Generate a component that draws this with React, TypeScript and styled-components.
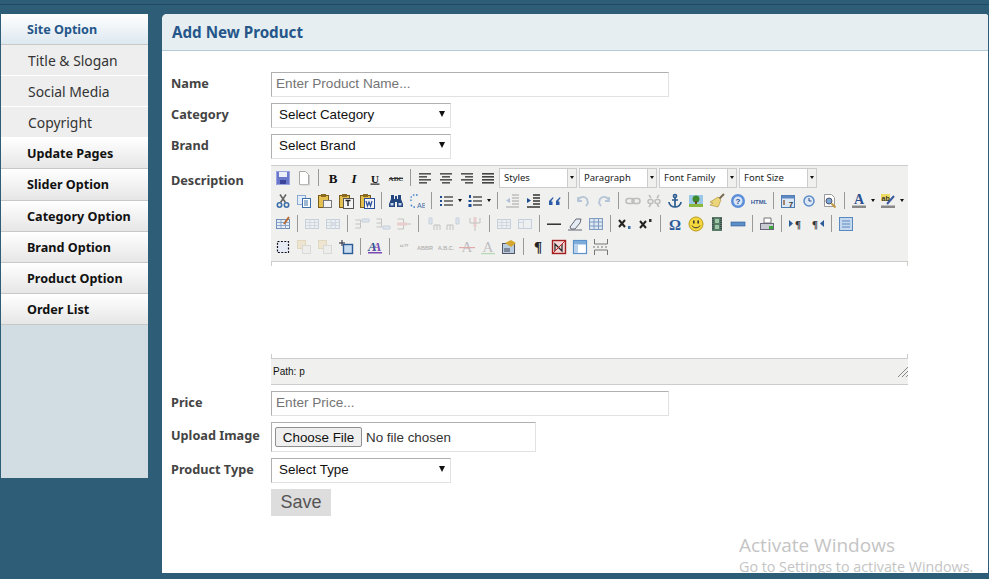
import React from "react";
import styled, { createGlobalStyle } from "styled-components";

const GlobalStyle = createGlobalStyle`
  html, body {
    margin: 0;
    padding: 0;
    height: 100%;
    background-color: #2e5d78;
    overflow: hidden;
  }
  * {
    box-sizing: border-box;
  }
`;

const Page = styled.div`
  position: relative;
  display: flex;
  align-items: flex-start;
  gap: 14px;
  height: 579px;
  padding: 14px 1px 6px 1px;
  background: linear-gradient(#1f4a62, #1f4a62) left 4px / 100% 1px no-repeat, #2e5d78;
  font-family: "Noto Sans", sans-serif;
`;

const Sidebar = styled.nav`
  display: flex;
  flex-direction: column;
  flex: none;
  width: 147px;
  height: 464px;
  background-color: #d1dde3;
`;

const MenuHead = styled.div<{ $active?: boolean; $tall?: boolean }>`
  display: flex;
  align-items: center;
  flex: none;
  height: ${(props) => (props.$tall ? "32px" : "31px")};
  padding-left: 26px;
  font-size: 12.6px;
  font-weight: 700;
  color: ${(props) => (props.$active ? "#25568a" : "#111111")};
  background: linear-gradient(
    ${(props) => (props.$active ? "#ffffff, #dde8f0" : "#ffffff, #e6e6e6")}
  );
  border-bottom: 1px solid #c8c8c8;
`;

const MenuSub = styled.div`
  display: flex;
  align-items: center;
  flex: none;
  height: 31px;
  padding-left: 27px;
  font-size: 13.9px;
  color: #333333;
  background-color: #eeeeee;
  border-bottom: 1px solid #ffffff;
`;

const Main = styled.main`
  flex: 1;
  height: 559px;
  background-color: #ffffff;
  border-top-left-radius: 5px;
  border-top-right-radius: 3px;
`;

const PanelTitle = styled.h2`
  display: flex;
  align-items: center;
  height: 37px;
  margin: 0;
  padding-left: 10px;
  font-size: 15.2px;
  font-weight: 700;
  color: #25568a;
  background-color: #e6eef1;
  border-bottom: 1px solid #b4ccd8;
  border-top-left-radius: 5px;
  border-top-right-radius: 3px;
`;

const Form = styled.form`
  display: flex;
  flex-direction: column;
  gap: 6px;
  padding: 21px 0 0 9px;
`;

const Row = styled.div<{ $top?: boolean }>`
  display: flex;
  align-items: ${(props) => (props.$top ? "flex-start" : "center")};
`;

const Label = styled.label<{ $top?: boolean }>`
  flex: none;
  width: 100px;
  padding-top: ${(props) => (props.$top ? "6px" : "0")};
  margin-top: ${(props) => (props.$top ? "0" : "-4px")};
  font-size: 12.7px;
  font-weight: 700;
  color: #444444;
`;

const TextInput = styled.input`
  width: 398px;
  height: 25px;
  padding: 0 4px 2px;
  font-family: "Liberation Sans", sans-serif;
  font-size: 13.6px;
  background-color: #ffffff;
  border: 1px solid;
  border-color: #b0b0b0 #e2e2e2 #e2e2e2 #b0b0b0;
  &::placeholder {
    color: #757575;
  }
`;

const SelectWrap = styled.div`
  position: relative;
  width: 180px;
  height: 25px;
`;

const Select = styled.select`
  display: block;
  appearance: none;
  width: 100%;
  height: 100%;
  padding: 0 7px 2px;
  font-family: "Liberation Sans", sans-serif;
  font-size: 13.4px;
  color: #111111;
  background-color: #ffffff;
  border: 1px solid;
  border-color: #b0b0b0 #e2e2e2 #e2e2e2 #b0b0b0;
  border-radius: 0;
`;

const SelectArrow = styled.span`
  position: absolute;
  top: 8px;
  right: 6px;
  width: 0;
  height: 0;
  border-left: 3.5px solid transparent;
  border-right: 3.5px solid transparent;
  border-top: 6px solid #111111;
  pointer-events: none;
`;

const FileInput = styled.input`
  width: 265px;
  height: 30px;
  padding: 4px 3px;
  font-family: "Liberation Sans", sans-serif;
  font-size: 13.4px;
  color: #333333;
  border: 1px solid;
  border-color: #b0b0b0 #e2e2e2 #e2e2e2 #b0b0b0;
  &::file-selector-button {
    width: 87px;
    height: 20px;
    margin-right: 4px;
    padding: 0;
    font-family: "Liberation Sans", sans-serif;
    font-size: 13.4px;
    color: #111111;
    background-color: #efefef;
    border: 1px solid #8f8f8f;
    border-radius: 2px;
  }
`;

const SaveButton = styled.button`
  width: 60px;
  height: 27px;
  margin-left: 100px;
  padding: 0;
  font-family: "Liberation Sans", sans-serif;
  font-size: 18px;
  color: #555555;
  background-color: #dddddd;
  border: none;
`;

const Editor = styled.div`
  display: flex;
  flex-direction: column;
  width: 637px;
  height: 220px;
  font-family: "Liberation Sans", sans-serif;
`;

const Toolbars = styled.div`
  display: flex;
  flex-direction: column;
  flex: none;
  height: 97px;
  padding-left: 1px;
  background-color: #f0f0ee;
  border-top: 1px solid #cccccc;
  border-bottom: 1px solid #cccccc;
`;

const ToolRow = styled.div`
  display: flex;
  align-items: center;
  height: 23px;
`;

const ToolButton = styled.span<{ $muted?: boolean }>`
  display: flex;
  flex: none;
  align-items: center;
  justify-content: center;
  width: 21px;
  height: 20px;
  opacity: ${(props) => (props.$muted ? 0.32 : 1)};
`;

const ToolSep = styled.span`
  flex: none;
  width: 1px;
  height: 17px;
  margin: 0 3.5px;
  background-color: #999999;
`;

const ToolCaret = styled.span`
  flex: none;
  width: 0;
  height: 0;
  margin: 0 2.5px 0 1.5px;
  border-left: 2.5px solid transparent;
  border-right: 2.5px solid transparent;
  border-top: 3px solid #111111;
`;

const ToolSelect = styled.span`
  display: flex;
  flex: none;
  align-items: center;
  justify-content: space-between;
  width: 78px;
  height: 20px;
  margin-right: 2px;
  padding-left: 4px;
  font-family: "Noto Sans", sans-serif;
  font-size: 9.5px;
  color: #222222;
  background: linear-gradient(to right, #ffffff 67px, #cccccc 67px, #cccccc 68px, #f0f0ee 68px);
  border: 1px solid #cccccc;
`;

const SelectCaret = styled.span`
  flex: none;
  width: 0;
  height: 0;
  margin-right: 2px;
  border-left: 2.5px solid transparent;
  border-right: 2.5px solid transparent;
  border-top: 3px solid #111111;
`;

const FontSelects = styled.div`
  display: flex;
  margin-left: 1px;
`;

const EditArea = styled.div`
  flex: 1;
  background:
    linear-gradient(#cccccc, #cccccc) left top / 1px 4px no-repeat,
    linear-gradient(#cccccc, #cccccc) right top / 1px 4px no-repeat,
    linear-gradient(#cccccc, #cccccc) left bottom / 1px 4px no-repeat,
    linear-gradient(#cccccc, #cccccc) right bottom / 1px 4px no-repeat,
    #ffffff;
`;

const StatusBar = styled.div`
  display: flex;
  flex: none;
  align-items: center;
  justify-content: space-between;
  height: 27px;
  padding: 0 0 0 2px;
  font-size: 10px;
  color: #111111;
  background-color: #f0f0ee;
  border-top: 1px solid #cccccc;
  border-bottom: 1px solid #cccccc;
`;

const Watermark = styled.div`
  position: absolute;
  left: 739px;
  top: 532px;
  width: 245px;
  height: 41px;
  overflow: hidden;
  font-family: "Open Sans", sans-serif;
  color: #c4c4c4;
  pointer-events: none;
`;

const WatermarkTitle = styled.div`
  font-size: 19px;
  line-height: 26px;
`;

const WatermarkText = styled.div`
  font-size: 14.3px;
  line-height: 18px;
  white-space: nowrap;
`;

const lines = (rows: [number, number][], color = "#555") => (
  <g fill={color}>
    {rows.map(([x, w], i) => (
      <rect key={i} x={x} y={3 + i * 3} width={w} height={1.6} />
    ))}
  </g>
);

const doc = (x: number, y: number, w: number, h: number, fill = "#fff", stroke = "#5577aa") => (
  <rect x={x + 0.5} y={y + 0.5} width={w} height={h} fill={fill} stroke={stroke} />
);

const clip = (inner: React.ReactNode) => (
  <>
    <rect x="1.5" y="2.5" width="10" height="12" fill="#e4c050" stroke="#7a5c18" />
    <rect x="4" y="1" width="5" height="3" fill="#8a6a20" />
    {inner}
  </>
);

const tableGrid = (
  <>
    <rect x="1.5" y="3.5" width="13" height="9" fill="#e8eef6" stroke="#6f8fb8" />
    <path d="M1.5 6.5h13M1.5 9.5h13M6 3.5v9M10.5 3.5v9" stroke="#8da6c8" fill="none" />
  </>
);

const serifLabel = (label: string, style: string, size = 13, color = "#111") => (
  <text
    x="8"
    y="12.5"
    textAnchor="middle"
    fontFamily="Liberation Serif, serif"
    fontWeight="700"
    fontStyle={style}
    fontSize={size}
    fill={color}
  >
    {label}
  </text>
);

const icons: Record<string, React.ReactNode> = {
  save: (
    <>
      <rect x="1.5" y="1.5" width="13" height="13" fill="#6a78cc" stroke="#9aa2e0" />
      <rect x="4" y="2" width="8" height="5" fill="#eceef8" />
      <rect x="5" y="10" width="6" height="4" fill="#39449a" />
    </>
  ),
  newdoc: (
    <>
      <path d="M3.5 1.5h6l3 3v10h-9z" fill="#fff" stroke="#a8a8a8" />
      <path d="M13.5 5v10h-9" fill="none" stroke="#ccc" />
    </>
  ),
  bold: serifLabel("B", "normal"),
  italic: serifLabel("I", "italic"),
  underline: (
    <>
      {serifLabel("U", "normal", 11)}
      <rect x="3.5" y="13.5" width="9" height="1.2" fill="#222" />
    </>
  ),
  strike: (
    <>
      <text x="8" y="11" textAnchor="middle" fontFamily="Liberation Serif, serif" fontWeight="700" fontSize="7" fill="#333">
        ABC
      </text>
      <rect x="1" y="8" width="14" height="1" fill="#333" />
    </>
  ),
  left: lines([[2, 12], [2, 8], [2, 12], [2, 8]]),
  center: lines([[2, 12], [4, 8], [2, 12], [4, 8]]),
  right: lines([[2, 12], [6, 8], [2, 12], [6, 8]]),
  justify: lines([[2, 12], [2, 12], [2, 12], [2, 12]], "#444"),
  cut: (
    <g fill="none" stroke="#3c6ea8" strokeWidth="1.6">
      <path d="M5 1.5l5.5 8M11 1.5l-5.5 8" stroke="#666" />
      <circle cx="4.5" cy="12" r="2.2" />
      <circle cx="11.5" cy="12" r="2.2" />
    </g>
  ),
  copy: (
    <>
      {doc(1, 2, 8, 9, "#e4eefa", "#8aa8d0")}
      {doc(6, 5, 8, 9, "#ffffff", "#3c6ea8")}
      <path d="M8 8h4M8 10h4M8 12h4" stroke="#3c6ea8" />
    </>
  ),
  paste: clip(doc(6, 7, 8, 7, "#f4f4f4", "#777")),
  pastetext: clip(
    <>
      {doc(5, 5, 10, 10, "#f4f4f4", "#555")}
      <path d="M7.5 7.5h5M10 7.5v5.5" stroke="#222" strokeWidth="1.4" />
    </>
  ),
  pasteword: clip(
    <>
      {doc(5, 5, 10, 10, "#f4f4f4", "#2a4f9a")}
      <path d="M7 8l1.5 5 1.5-4 1.5 4 1.5-5" stroke="#2a4f9a" fill="none" strokeWidth="1.2" />
    </>
  ),
  find: (
    <g fill="#24467e">
      <path d="M3 2h3v4h1V3h2v3h1V2h3v4l2 5v3H9V9H7v5H1v-3l2-5z" />
      <rect x="2.5" y="10" width="3" height="2.5" fill="#c4d4ee" />
      <rect x="10.5" y="10" width="3" height="2.5" fill="#c4d4ee" />
    </g>
  ),
  replace: (
    <>
      <path d="M2 8V5a3 3 0 0 1 3-3h4M6 14H5a3 3 0 0 1-3-3" fill="none" stroke="#3c7ac8" strokeWidth="1.3" strokeDasharray="1.6 1.6" />
      <text x="8" y="14.5" fontFamily="Liberation Sans, sans-serif" fontSize="7" fill="#3c6ea8">
        AB
      </text>
    </>
  ),
  bullist: (
    <>
      <path d="M6 4h9M6 8h9M6 12h9" stroke="#555" strokeWidth="1.4" />
      <path d="M2 3h2v2H2zM2 7h2v2H2zM2 11h2v2H2z" fill="#1e4a90" />
    </>
  ),
  numlist: (
    <>
      <path d="M6 4h9M6 8h9M6 12h9" stroke="#555" strokeWidth="1.4" />
      <path d="M2 2h2v3H2zM1.5 7h3v2h-3zM1.5 11h3v3h-3z" fill="#1e4a90" />
    </>
  ),
  outdent: (
    <>
      <path d="M8 2h7M8 5h7M8 8h7M8 11h7M2 14h13" stroke="#555" strokeWidth="1.3" />
      <path d="M6 5v5L2 7.5z" fill="#2c5ca8" />
    </>
  ),
  indent: (
    <>
      <path d="M8 2h7M8 5h7M8 8h7M8 11h7M2 14h13" stroke="#333" strokeWidth="1.3" />
      <path d="M2 5v5l4-2.5z" fill="#1e4a90" />
    </>
  ),
  quote: (
    <g fill="#2c5ca8">
      <path d="M7 4L3 8v4h3.5V8.5H5L7.5 5zM14 4l-4 4v4h3.5V8.5H12L14.5 5z" />
    </g>
  ),
  undo: <path d="M3 8a5 5 0 0 1 9-2l1 4-2 3M3 4v4h4" fill="none" stroke="#3c6ea8" strokeWidth="1.8" />,
  redo: <path d="M13 8a5 5 0 0 0-9-2L3 10l2 3M13 4v4H9" fill="none" stroke="#3c6ea8" strokeWidth="1.8" />,
  link: (
    <g fill="none" stroke="#555" strokeWidth="1.5">
      <rect x="1" y="5.5" width="8" height="5" rx="2.5" />
      <rect x="7" y="5.5" width="8" height="5" rx="2.5" />
    </g>
  ),
  unlink: (
    <g fill="none" stroke="#555" strokeWidth="1.5">
      <path d="M3 2l2 3M13 14l-2-3M13 2l-2 3M3 14l2-3" />
      <rect x="2" y="6.5" width="5" height="4" rx="2" />
      <rect x="9" y="6.5" width="5" height="4" rx="2" />
    </g>
  ),
  anchor: (
    <g fill="none" stroke="#2c5c90" strokeWidth="1.7">
      <circle cx="8" cy="3" r="1.5" />
      <path d="M8 4.5V14M5 7h6M2 9c0 3 3 5 6 5s6-2 6-5" />
    </g>
  ),
  image: (
    <>
      <rect x="1" y="2" width="14" height="12" fill="#9cc8e8" />
      <circle cx="8" cy="6" r="3.5" fill="#3c8a2c" />
      <rect x="7" y="8" width="2" height="4" fill="#6a4a20" />
      <rect x="1" y="11" width="14" height="3" fill="#8ab83c" />
    </>
  ),
  cleanup: (
    <>
      <path d="M15 1L9 7" stroke="#7a6a50" strokeWidth="2" />
      <path d="M9 4l3 3-3 7-8-2 3-2-3-1z" fill="#ecd478" stroke="#a88a30" strokeWidth="0.6" />
    </>
  ),
  help: (
    <>
      <circle cx="8" cy="8" r="7" fill="#5c8ed8" />
      <circle cx="8" cy="8" r="4.5" fill="#d8e6f8" />
      <text x="8" y="11" textAnchor="middle" fontFamily="Liberation Sans, sans-serif" fontWeight="700" fontSize="8" fill="#234a90">
        ?
      </text>
    </>
  ),
  html: (
    <text x="8" y="10.5" textAnchor="middle" fontFamily="Liberation Sans, sans-serif" fontWeight="700" fontSize="6" fill="#3c5c9c">
      HTML
    </text>
  ),
  date: (
    <>
      <rect x="1.5" y="2.5" width="13" height="12" fill="#dce8f6" stroke="#4f7ab0" />
      <rect x="1.5" y="2.5" width="13" height="3" fill="#5c88c0" />
      <text x="11" y="14" textAnchor="middle" fontFamily="Liberation Sans, sans-serif" fontWeight="700" fontSize="8" fill="#333">
        7
      </text>
      <path d="M4 7v5" stroke="#8a5a30" strokeWidth="1.4" />
    </>
  ),
  time: (
    <>
      <circle cx="8" cy="8" r="5" fill="#dce8f8" stroke="#5c8cc8" strokeWidth="1.5" />
      <path d="M8 5v3h2.5" fill="none" stroke="#2c4a80" />
    </>
  ),
  preview: (
    <>
      <path d="M2.5 1.5h7l3 3v9h-10z" fill="#fff" stroke="#999" />
      <circle cx="7" cy="8" r="3" fill="#7ca8d8" stroke="#556" />
      <path d="M9.5 10.5l4 4" stroke="#c09a40" strokeWidth="2" />
    </>
  ),
  fore: (
    <>
      <text x="8" y="11" textAnchor="middle" fontFamily="Liberation Serif, serif" fontWeight="700" fontSize="14" fill="#2a4f90">
        A
      </text>
      <rect x="1" y="12.5" width="14" height="2.5" fill="#888" />
    </>
  ),
  back: (
    <>
      <rect x="1" y="1" width="9" height="7" fill="#eedc60" />
      <text x="1.5" y="7.5" fontFamily="Liberation Sans, sans-serif" fontWeight="700" fontSize="7" fill="#333">
        ab
      </text>
      <path d="M14 3L7 11" stroke="#3c5c9c" strokeWidth="2" />
      <rect x="1" y="12.5" width="14" height="2.5" fill="#888" />
    </>
  ),
  tableprops: (
    <>
      {tableGrid}
      <path d="M14 1L9 8" stroke="#b86a30" strokeWidth="2" />
    </>
  ),
  rowprops: tableGrid,
  cellprops: (
    <>
      {tableGrid}
      <rect x="6" y="6.5" width="4.5" height="3" fill="#9cb6d8" />
    </>
  ),
  rowbefore: (
    <>
      <path d="M1.5 4h5M1.5 8h5M1.5 12h5M6.5 4v8" fill="none" stroke="#666" />
      <path d="M8 3h7v3H8z" fill="#bcd0e8" stroke="#6f8fb8" />
    </>
  ),
  rowafter: (
    <>
      <path d="M1.5 3h5M1.5 7h5M1.5 11h5M6.5 3v8" fill="none" stroke="#666" />
      <path d="M8 10h7v3H8z" fill="#bcd0e8" stroke="#6f8fb8" />
    </>
  ),
  rowdel: (
    <>
      <path d="M1.5 3h6M1.5 13h6M7.5 3v10" fill="none" stroke="#666" />
      <rect x="1" y="6.5" width="10" height="3" fill="#d88a8a" />
      <path d="M11 8h4" stroke="#666" />
    </>
  ),
  colbefore: (
    <>
      <path d="M4 2h3v6H4z" fill="#bcd0e8" stroke="#6f8fb8" />
      <path d="M9 9h6M9 9v5M12 9v5M15 9v5" fill="none" stroke="#666" />
    </>
  ),
  colafter: (
    <>
      <path d="M10 2h3v6h-3z" fill="#bcd0e8" stroke="#6f8fb8" />
      <path d="M1 9h6M1 9v5M4 9v5M7 9v5" fill="none" stroke="#666" />
    </>
  ),
  coldel: (
    <>
      <rect x="6.5" y="1" width="3" height="10" fill="#d88a8a" />
      <path d="M3 2v5h10V2M8 11v4" fill="none" stroke="#666" />
    </>
  ),
  split: tableGrid,
  merge: (
    <>
      <rect x="1.5" y="3.5" width="13" height="9" fill="#e8eef6" stroke="#6f8fb8" />
      <path d="M1.5 6.5h5M6.5 3.5v9" stroke="#8da6c8" fill="none" />
    </>
  ),
  hr: <rect x="1" y="7.5" width="14" height="1.4" fill="#222" />,
  eraser: (
    <>
      <path d="M3 11l6-8h5l-1 4-5 6H4z" fill="#e6ecf4" stroke="#667" />
      <path d="M1 14h14" stroke="#667" />
    </>
  ),
  visual: (
    <>
      <rect x="1.5" y="2.5" width="13" height="11" fill="#dfe8f2" stroke="#7f9cc0" />
      <path d="M1.5 6h13M1.5 10h13M6 2.5v11M10.5 2.5v11" stroke="#7f9cc0" fill="none" />
    </>
  ),
  sub: (
    <>
      <path d="M2 4l6 7M8 4l-6 7" stroke="#222" strokeWidth="2" />
      <rect x="11" y="10" width="2.5" height="3" fill="#3c6ea8" />
    </>
  ),
  sup: (
    <>
      <path d="M2 5l6 7M8 5l-6 7" stroke="#222" strokeWidth="2" />
      <rect x="11" y="3" width="2.5" height="3" fill="#333" />
    </>
  ),
  omega: (
    <text x="8" y="13.5" textAnchor="middle" fontFamily="Liberation Serif, serif" fontWeight="700" fontSize="15" fill="#2a5a9c">
      Ω
    </text>
  ),
  smile: (
    <>
      <circle cx="8" cy="8" r="7" fill="#f4d83c" stroke="#b89a20" />
      <rect x="5" y="4.5" width="1.6" height="3" fill="#333" />
      <rect x="9.4" y="4.5" width="1.6" height="3" fill="#333" />
      <path d="M4 9.5c1 3 7 3 8 0" fill="none" stroke="#333" />
    </>
  ),
  media: (
    <>
      <rect x="3" y="1" width="10" height="14" fill="#5a7a68" />
      <rect x="6" y="3" width="4" height="4" fill="#9cc8a8" />
      <rect x="6" y="9" width="4" height="4" fill="#9cc8a8" />
      <path d="M4 2v12M12 2v12" stroke="#223" strokeDasharray="1 1" />
    </>
  ),
  advhr: <rect x="1" y="6" width="14" height="4" fill="#5c8ec8" stroke="#2c5c98" strokeWidth="0.6" />,
  print: (
    <>
      <path d="M5 2h7v5H5z" fill="#fff" stroke="#777" />
      <rect x="1.5" y="7.5" width="13" height="6" fill="#c8ccd2" stroke="#667" />
      <rect x="10" y="10" width="4" height="3" fill="#3ca83c" />
    </>
  ),
  ltr: (
    <>
      <path d="M1 4v7l4-3.5z" fill="#2c5c98" />
      <text x="10" y="12" textAnchor="middle" fontFamily="Liberation Serif, serif" fontWeight="700" fontSize="11" fill="#333">
        ¶
      </text>
    </>
  ),
  rtl: (
    <>
      <text x="6" y="12" textAnchor="middle" fontFamily="Liberation Serif, serif" fontWeight="700" fontSize="11" fill="#333">
        ¶
      </text>
      <path d="M15 4v7l-4-3.5z" fill="#2c5c98" />
    </>
  ),
  fullscreen: (
    <>
      <rect x="1.5" y="1.5" width="13" height="13" fill="#c4d8f0" stroke="#5c88c0" />
      <path d="M4 5h8M4 8h8M4 11h8" stroke="#5c88c0" />
    </>
  ),
  layer: <rect x="2.5" y="2.5" width="11" height="11" fill="#e6ebf6" stroke="#112" strokeWidth="1.2" strokeDasharray="2 1.4" />,
  forward: (
    <>
      <rect x="1.5" y="1.5" width="8" height="8" fill="#e8d090" stroke="#c0a860" />
      <rect x="6.5" y="6.5" width="8" height="8" fill="#e8e8e8" stroke="#aaa" />
    </>
  ),
  absolute: (
    <>
      <path d="M4 1v6M1 4h6" stroke="#223" />
      <rect x="5.5" y="5.5" width="9" height="9" fill="#c8dcf0" stroke="#2c5c98" strokeWidth="1.4" />
    </>
  ),
  style: (
    <>
      <text x="1" y="12" letterSpacing="-4" fontFamily="Liberation Serif, serif" fontWeight="700" fontStyle="italic" fontSize="13">
        <tspan fill="#2a4f90">A</tspan>
        <tspan fill="#7a4ab0">A</tspan>
      </text>
      <rect x="1" y="13" width="14" height="1.5" fill="#7a4ab0" />
    </>
  ),
  cite: (
    <text x="8" y="11" textAnchor="middle" fontFamily="Liberation Serif, serif" fontWeight="700" fontSize="9" fill="#333">
      “”
    </text>
  ),
  abbr: (
    <text x="8" y="10.5" textAnchor="middle" fontFamily="Liberation Sans, sans-serif" fontWeight="700" fontSize="5.5" fill="#333">
      ABBR
    </text>
  ),
  acronym: (
    <text x="8" y="10.5" textAnchor="middle" fontFamily="Liberation Sans, sans-serif" fontWeight="700" fontSize="5.5" fill="#333">
      A.B.C.
    </text>
  ),
  del: (
    <>
      <text x="8" y="13" textAnchor="middle" fontFamily="Liberation Serif, serif" fontSize="15" fill="#556">
        A
      </text>
      <rect x="0" y="8" width="16" height="1.2" fill="#c02020" />
    </>
  ),
  ins: (
    <>
      <text x="8" y="13" textAnchor="middle" fontFamily="Liberation Serif, serif" fontSize="15" fill="#556">
        A
      </text>
      <rect x="1" y="14" width="14" height="1.2" fill="#3ca83c" />
    </>
  ),
  attribs: (
    <>
      <rect x="1.5" y="4.5" width="12" height="10" fill="#b8cde0" stroke="#556" />
      <path d="M4 4l6-3 5 3-5 4z" fill="#d4a830" />
      <path d="M3 10h6M3 12h6" stroke="#445" />
    </>
  ),
  para: (
    <text x="8" y="13" textAnchor="middle" fontFamily="Liberation Serif, serif" fontWeight="700" fontSize="15" fill="#222">
      ¶
    </text>
  ),
  nonbreak: (
    <>
      <rect x="1.5" y="1.5" width="13" height="13" fill="#f4d8d8" stroke="#a02020" strokeWidth="1.4" />
      <path d="M4 12V5l7 7V5" fill="none" stroke="#222" strokeWidth="1.2" />
      <path d="M2 14L14 2" stroke="#c02020" />
    </>
  ),
  template: (
    <>
      <rect x="1.5" y="1.5" width="13" height="13" fill="#fff" stroke="#5c90c8" strokeWidth="1.2" />
      <rect x="2" y="2" width="12" height="3.5" fill="#7cacdc" />
      <rect x="2" y="6" width="4" height="8" fill="#b8d2ec" />
    </>
  ),
  pagebreak: (
    <path d="M1.5 0v5h13V0M1.5 16v-5h13v5M0 8h2M4 8h2M8 8h2M12 8h2" fill="none" stroke="#777" />
  ),
};

type Tool = string;
// "|" is a separator, "!x" a disabled button, "x^" a button with a dropdown caret
const toolRows: Tool[][] = [
  ["save", "newdoc", "|", "bold", "italic", "underline", "strike", "|", "left", "center", "right", "justify"],
  [
    "cut", "copy", "paste", "pastetext", "pasteword", "|", "find", "replace", "|", "bullist^", "numlist^", "|",
    "!outdent", "indent", "quote", "|", "!undo", "!redo", "|", "!link", "!unlink", "anchor", "image", "cleanup",
    "help", "html", "|", "date", "time", "preview", "|", "fore^", "back^",
  ],
  [
    "tableprops", "|", "!rowprops", "!cellprops", "|", "!rowbefore", "!rowafter", "!rowdel", "|", "!colbefore",
    "!colafter", "!coldel", "|", "!split", "!merge", "|", "hr", "eraser", "visual", "|", "sub", "sup", "|",
    "omega", "smile", "media", "advhr", "|", "print", "|", "ltr", "rtl", "|", "fullscreen",
  ],
  [
    "layer", "!forward", "!forward", "absolute", "|", "style", "|", "!cite", "!abbr", "!acronym", "!del", "!ins",
    "attribs", "|", "para", "nonbreak", "template", "pagebreak",
  ],
];

const fontSelects = ["Styles", "Paragraph", "Font Family", "Font Size"];

function ToolItem({ tool }: { tool: Tool }) {
  if (tool === "|") return <ToolSep />;
  const muted = tool.startsWith("!");
  const caret = tool.endsWith("^");
  const name = tool.replace("!", "").replace("^", "");
  return (
    <>
      <ToolButton $muted={muted}>
        <svg width="16" height="16" viewBox="0 0 16 16">
          {icons[name]}
        </svg>
      </ToolButton>
      {caret && <ToolCaret />}
    </>
  );
}

function ProductSelect({ text }: { text: string }) {
  return (
    <SelectWrap>
      <Select defaultValue={text}>
        <option>{text}</option>
      </Select>
      <SelectArrow />
    </SelectWrap>
  );
}

function App() {
  return (
    <Page>
      <GlobalStyle />
      <Sidebar>
        <MenuHead $active>Site Option</MenuHead>
        <MenuSub>Title &amp; Slogan</MenuSub>
        <MenuSub>Social Media</MenuSub>
        <MenuSub>Copyright</MenuSub>
        <MenuHead>Update Pages</MenuHead>
        <MenuHead $tall>Slider Option</MenuHead>
        <MenuHead>Category Option</MenuHead>
        <MenuHead>Brand Option</MenuHead>
        <MenuHead>Product Option</MenuHead>
        <MenuHead>Order List</MenuHead>
      </Sidebar>
      <Main>
        <PanelTitle>Add New Product</PanelTitle>
        <Form>
          <Row>
            <Label>Name</Label>
            <TextInput placeholder="Enter Product Name..." />
          </Row>
          <Row>
            <Label>Category</Label>
            <ProductSelect text="Select Category" />
          </Row>
          <Row>
            <Label>Brand</Label>
            <ProductSelect text="Select Brand" />
          </Row>
          <Row $top>
            <Label $top>Description</Label>
            <Editor>
              <Toolbars>
                {toolRows.map((tools, r) => (
                  <ToolRow key={r}>
                    {tools.map((tool, i) => (
                      <ToolItem key={i} tool={tool} />
                    ))}
                    {r === 0 && (
                      <FontSelects>
                        {fontSelects.map((name) => (
                          <ToolSelect key={name}>
                            {name}
                            <SelectCaret />
                          </ToolSelect>
                        ))}
                      </FontSelects>
                    )}
                  </ToolRow>
                ))}
              </Toolbars>
              <EditArea />
              <StatusBar>
                Path: p
                <svg width="10" height="10" viewBox="0 0 10 10">
                  <path d="M0 10L10 0M4 10l6-6M8 10l2-2" stroke="#888" fill="none" />
                </svg>
              </StatusBar>
            </Editor>
          </Row>
          <Row>
            <Label>Price</Label>
            <TextInput placeholder="Enter Price..." />
          </Row>
          <Row>
            <Label>Upload Image</Label>
            <FileInput type="file" />
          </Row>
          <Row>
            <Label>Product Type</Label>
            <ProductSelect text="Select Type" />
          </Row>
          <SaveButton type="button">Save</SaveButton>
        </Form>
      </Main>
      <Watermark>
        <WatermarkTitle>Activate Windows</WatermarkTitle>
        <WatermarkText>Go to Settings to activate Windows.</WatermarkText>
      </Watermark>
    </Page>
  );
}

export default App;
